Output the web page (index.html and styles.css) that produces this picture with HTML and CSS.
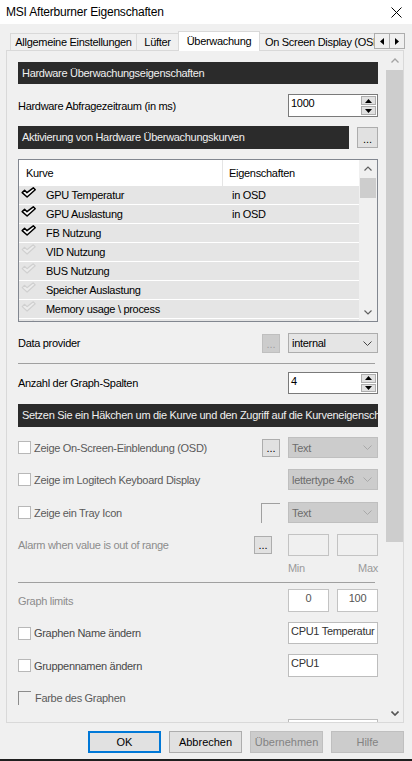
FILE: index.html
```html
<!DOCTYPE html>
<html lang="de">
<head>
<meta charset="UTF-8" />
<meta name="viewport" content="width=device-width, initial-scale=1.0"/>
<title>MSI Afterburner Eigenschaften</title>
<link rel="stylesheet" href="styles.css">
</head>
<body>
    <!-- shared tick shape for the curve list -->
    <svg class="svg-defs" aria-hidden="true">
        <defs>
            <symbol id="tick" viewBox="0 0 15 11">
                <path d="M1.2 5.6 L3.6 3.3 L6 5.7 L12.3 0.8 L14.2 2.8 L6.1 10 Z"/>
            </symbol>
        </defs>
    </svg>

    <!-- Title bar -->
    <div class="titlebar">
        <span class="title">MSI Afterburner Eigenschaften</span>
        <svg class="close" width="11" height="11" viewBox="0 0 11 11">
            <path d="M0.5 0.5 L10.5 10.5 M10.5 0.5 L0.5 10.5" stroke="#000" stroke-width="1"/>
        </svg>
    </div>

    <!-- Tabs -->
    <div class="tabstrip">
        <div class="tabs">
            <div class="tab tab-general">Allgemeine Einstellungen</div>
            <div class="tab tab-fan">Lüfter</div>
            <div class="tab tab-active">Überwachung</div>
            <div class="tab tab-osd">On Screen Display (OSD)</div>
        </div>
        <div class="tab-arrows">
            <div class="tab-arrow">
                <svg width="4" height="7" viewBox="0 0 4 7"><path d="M4 0 L0 3.5 L4 7 Z"/></svg>
            </div>
            <div class="tab-arrow">
                <svg width="4" height="7" viewBox="0 0 4 7"><path d="M0 0 L4 3.5 L0 7 Z"/></svg>
            </div>
        </div>
    </div>

    <div class="page">
        <div class="content">
            <div class="section-head">Hardware Überwachungseigenschaften</div>

            <div class="row row-poll">
                <span class="label">Hardware Abfragezeitraum (in ms)</span>
                <div class="textbox spinbox">
                    <span class="value">1000</span>
                    <div class="spin">
                        <span class="spin-btn"><svg width="7" height="4" viewBox="0 0 7 4"><path d="M0 4 L3.5 0 L7 4 Z"/></svg></span>
                        <span class="spin-btn"><svg width="7" height="4" viewBox="0 0 7 4"><path d="M0 0 L7 0 L3.5 4 Z"/></svg></span>
                    </div>
                </div>
            </div>

            <div class="row row-curves">
                <div class="section-head head-curves">Aktivierung von Hardware Überwachungskurven</div>
                <button class="dots dots-head">...</button>
            </div>

            <div class="curve-list">
                <div class="list-main">
                    <div class="list-header">
                        <span class="hdr-name">Kurve</span>
                        <span class="hdr-props">Eigenschaften</span>
                    </div>
                    <div class="list-row">
                        <svg class="tick on"><use href="#tick"/></svg>
                        <span class="item-name">GPU Temperatur</span>
                        <span class="item-props">in OSD</span>
                    </div>
                    <div class="list-row">
                        <svg class="tick on"><use href="#tick"/></svg>
                        <span class="item-name">GPU Auslastung</span>
                        <span class="item-props">in OSD</span>
                    </div>
                    <div class="list-row">
                        <svg class="tick on"><use href="#tick"/></svg>
                        <span class="item-name">FB Nutzung</span>
                    </div>
                    <div class="list-row">
                        <svg class="tick"><use href="#tick"/></svg>
                        <span class="item-name">VID Nutzung</span>
                    </div>
                    <div class="list-row">
                        <svg class="tick"><use href="#tick"/></svg>
                        <span class="item-name">BUS Nutzung</span>
                    </div>
                    <div class="list-row">
                        <svg class="tick"><use href="#tick"/></svg>
                        <span class="item-name">Speicher Auslastung</span>
                    </div>
                    <div class="list-row">
                        <svg class="tick"><use href="#tick"/></svg>
                        <span class="item-name">Memory usage \ process</span>
                    </div>
                    <div class="list-row">
                        <svg class="tick"><use href="#tick"/></svg>
                    </div>
                </div>
                <div class="list-scroll">
                    <span class="sb-btn"><svg width="8" height="5" viewBox="0 0 8 5"><path d="M0.5 4.5 L4 1 L7.5 4.5" fill="none" stroke="#606060" stroke-width="1.2"/></svg></span>
                    <span class="sb-thumb list-thumb"></span>
                    <span class="sb-fill"></span>
                    <span class="sb-btn"><svg width="8" height="5" viewBox="0 0 8 5"><path d="M0.5 0.5 L4 4 L7.5 0.5" fill="none" stroke="#606060" stroke-width="1.2"/></svg></span>
                </div>
            </div>

            <div class="row row-provider">
                <span class="label">Data provider</span>
                <button class="dots" disabled>...</button>
                <div class="combo combo-on">
                    <span>internal</span>
                    <svg width="9" height="5" viewBox="0 0 9 5"><path d="M0.5 0.5 L4.5 4.5 L8.5 0.5" fill="none" stroke="#444" stroke-width="1"/></svg>
                </div>
            </div>

            <div class="separator sep-top"></div>

            <div class="row row-columns">
                <span class="label">Anzahl der Graph-Spalten</span>
                <div class="textbox spinbox">
                    <span class="value">4</span>
                    <div class="spin">
                        <span class="spin-btn"><svg width="7" height="4" viewBox="0 0 7 4"><path d="M0 4 L3.5 0 L7 4 Z"/></svg></span>
                        <span class="spin-btn"><svg width="7" height="4" viewBox="0 0 7 4"><path d="M0 0 L7 0 L3.5 4 Z"/></svg></span>
                    </div>
                </div>
            </div>

            <div class="section-head head-hint">Setzen Sie ein Häkchen um die Kurve und den Zugriff auf die Kurveneigenschaften zu aktivieren</div>

            <div class="row row-osd">
                <span class="checkbox"></span>
                <span class="label muted">Zeige On-Screen-Einblendung (OSD)</span>
                <button class="dots">...</button>
                <div class="combo">
                    <span>Text</span>
                    <svg width="9" height="5" viewBox="0 0 9 5"><path d="M0.5 0.5 L4.5 4.5 L8.5 0.5" fill="none" stroke="#a8a8a8" stroke-width="1"/></svg>
                </div>
            </div>

            <div class="row row-lcd">
                <span class="checkbox"></span>
                <span class="label muted">Zeige im Logitech Keyboard Display</span>
                <div class="combo">
                    <span>lettertype 4x6</span>
                    <svg width="9" height="5" viewBox="0 0 9 5"><path d="M0.5 0.5 L4.5 4.5 L8.5 0.5" fill="none" stroke="#a8a8a8" stroke-width="1"/></svg>
                </div>
            </div>

            <div class="row row-tray">
                <span class="checkbox"></span>
                <span class="label muted">Zeige ein Tray Icon</span>
                <span class="color-well"></span>
                <div class="combo">
                    <span>Text</span>
                    <svg width="9" height="5" viewBox="0 0 9 5"><path d="M0.5 0.5 L4.5 4.5 L8.5 0.5" fill="none" stroke="#a8a8a8" stroke-width="1"/></svg>
                </div>
            </div>

            <div class="row row-alarm">
                <span class="label faint">Alarm when value is out of range</span>
                <button class="dots">...</button>
                <span class="smallbox"></span>
                <span class="smallbox"></span>
            </div>

            <div class="row row-minmax">
                <span class="label"></span>
                <span class="range-cap">Min</span>
                <span class="range-cap cap-right">Max</span>
            </div>

            <div class="separator sep-limits"></div>

            <div class="row row-limits">
                <span class="label faint">Graph limits</span>
                <span class="smallbox filled">0</span>
                <span class="smallbox filled">100</span>
            </div>

            <div class="row row-name">
                <span class="checkbox"></span>
                <span class="label dim">Graphen Name ändern</span>
                <span class="textbox namebox">CPU1 Temperatur</span>
            </div>

            <div class="row row-group">
                <span class="checkbox"></span>
                <span class="label dim">Gruppennamen ändern</span>
                <span class="textbox namebox">CPU1</span>
            </div>

            <div class="row row-color">
                <span class="checkbox sunken"></span>
                <span class="label muted">Farbe des Graphen</span>
            </div>

            <div class="row row-cut">
                <span class="label"></span>
                <span class="textbox namebox"></span>
            </div>
        </div>

        <div class="vscroll">
            <span class="sb-btn main-up"><svg width="8" height="5" viewBox="0 0 8 5"><path d="M0.5 4.5 L4 1 L7.5 4.5" fill="none" stroke="#a3a3a3" stroke-width="1.3"/></svg></span>
            <span class="sb-thumb main-thumb"></span>
            <span class="sb-fill"></span>
            <span class="sb-btn main-down"><svg width="8" height="5" viewBox="0 0 8 5"><path d="M0.5 0.5 L4 4 L7.5 0.5" fill="none" stroke="#555" stroke-width="1.6"/></svg></span>
        </div>
    </div>

    <div class="buttons">
        <button class="btn btn-default">OK</button>
        <button class="btn">Abbrechen</button>
        <button class="btn" disabled>Übernehmen</button>
        <button class="btn" disabled>Hilfe</button>
    </div>
    <div class="edge"></div>
</body>
</html>
```

FILE: styles.css
```css
html, body {
    margin: 0;
    padding: 0;
    height: 100%;
    overflow: hidden;
}

body {
    font-family: "Liberation Sans", Arial, sans-serif;
    font-size: 11px;
    letter-spacing: -0.3px;
    color: #000;
    background: #f0f0f0;
}

.svg-defs {
    position: absolute;
    width: 0;
    height: 0;
}

/* ---- title bar ---- */
.titlebar {
    height: 24px;
    background: #fff;
    display: flex;
    align-items: center;
    justify-content: space-between;
    padding: 0 10px 0 6px;
}

.title {
    font-size: 12px;
    letter-spacing: -0.2px;
}

/* ---- tab strip ---- */
.tabstrip {
    margin-top: 7px;
    height: 20px;
    padding: 0 7px 0 10px;
    display: flex;
    position: relative;
    z-index: 1;
}

.tabs {
    flex: 1;
    min-width: 0;
    display: flex;
    align-items: flex-start;
    overflow: hidden;
}

.tab {
    flex: none;
    box-sizing: border-box;
    height: 17px;
    margin-top: 2px;
    margin-left: -1px;
    border: 1px solid #d9d9d9;
    border-bottom: none;
    text-align: center;
    line-height: 16px;
    white-space: nowrap;
}
.tab:first-child { margin-left: 0; }

.tab-general { width: 127px; }
.tab-fan { width: 43px; }

.tab-active {
    width: 82px;
    height: 20px;
    margin-top: 0;
    background: #fff;
    line-height: 18px;
}

.tab-osd {
    padding-left: 5px;
    text-align: left;
}

.tab-arrows {
    display: flex;
    margin-top: 2px;
}

.tab-arrow {
    box-sizing: border-box;
    width: 16px;
    height: 16px;
    border: 1px solid #adadad;
    background: #f0f0f0;
    display: flex;
    align-items: center;
    justify-content: center;
}
.tab-arrow + .tab-arrow { margin-left: -1px; }

/* ---- tab page ---- */
.page {
    box-sizing: border-box;
    width: 398px;
    height: 673px;
    margin: -1px 0 0 6px;
    border: 1px solid #d9d9d9;
    background: #fff;
    display: flex;
}

.content {
    flex: 1;
    min-width: 0;
    overflow: hidden;
    padding: 11px 8px 0 11px;
    background: #f0f0f0;
}

.section-head {
    height: 22px;
    line-height: 22px;
    padding-left: 4px;
    background: #2b2b2b;
    color: #f0f0f0;
    white-space: nowrap;
    overflow: hidden;
}

.row {
    display: flex;
    align-items: center;
}

.label {
    flex: 1;
    min-width: 0;
    white-space: nowrap;
}

.muted { color: #5a5a5a; }
.dim { color: #484848; }
.faint { color: #8c8c8c; }

/* vertical rhythm of the form */
.row-poll { margin-top: 10px; height: 23px; }
.row-curves { margin-top: 9px; height: 23px; }
.row-provider { margin-top: 11px; height: 20px; }
.row-columns { margin-top: 8px; height: 22px; }
.head-hint { margin-top: 10px; height: 23px; line-height: 23px; }
.row-osd { margin-top: 10px; height: 21px; }
.row-lcd { margin-top: 11px; height: 21px; }
.row-tray { margin-top: 12px; height: 21px; }
.row-alarm { margin-top: 11px; height: 22px; }
.row-minmax { margin-top: 6px; height: 12px; }
.row-limits { margin-top: 6px; height: 23px; }
.row-name { margin-top: 10px; height: 22px; }
.row-group { margin-top: 10px; height: 23px; }
.row-color { margin-top: 13px; height: 15px; }
.row-cut { margin-top: 14px; height: 22px; }

.head-curves {
    flex: 1;
    height: 23px;
    line-height: 23px;
}

.separator {
    width: 357px;
    border-top: 1px solid #a0a0a0;
}
.sep-top { margin-top: 10px; }
.sep-limits { margin-top: 8px; }

/* ---- inputs ---- */
.textbox {
    box-sizing: border-box;
    width: 90px;
    height: 100%;
    border: 1px solid #7a7a7a;
    background: #fff;
    display: flex;
    padding: 1px 1px 1px 2px;
    white-space: nowrap;
    overflow: hidden;
}

.value {
    flex: 1;
    padding-top: 1px;
}

.spin {
    width: 15px;
    display: flex;
    flex-direction: column;
    gap: 1px;
}

.spin-btn {
    flex: 1;
    box-sizing: border-box;
    border: 1px solid #adadad;
    background: #e1e1e1;
    display: flex;
    align-items: center;
    justify-content: center;
}

.namebox {
    border-color: #bdbdbd;
    color: #333;
    padding: 2px 2px 0 2px;
}

.smallbox {
    box-sizing: border-box;
    width: 41px;
    height: 100%;
    border: 1px solid #c3c3c3;
    margin-left: 8px;
    color: #555;
    text-align: center;
    padding-top: 2px;
}
.row-alarm .smallbox:first-of-type,
.row-limits .smallbox:first-of-type { margin-left: 0; }

.filled { background: #fff; }

.range-cap {
    width: 41px;
    color: #9a9a9a;
}
.cap-right {
    margin-left: 8px;
    text-align: right;
}

.combo {
    box-sizing: border-box;
    width: 90px;
    height: 100%;
    border: 1px solid #bfbfbf;
    background: #ccc;
    color: #6d6d6d;
    display: flex;
    align-items: center;
    justify-content: space-between;
    padding: 0 5px 0 3px;
    white-space: nowrap;
}

.combo-on {
    background: #e5e5e5;
    border-color: #adadad;
    color: #000;
}

.dots {
    box-sizing: border-box;
    width: 18px;
    height: 18px;
    margin: 0 8px 0 0;
    padding: 0 0 2px 0;
    border: 1px solid #adadad;
    background: #e1e1e1;
    font: inherit;
    color: #000;
    line-height: 1;
    display: flex;
    align-items: flex-end;
    justify-content: center;
}

.dots:disabled {
    height: 19px;
    background: #ccc;
    border-color: #bfbfbf;
    color: #a0a0a0;
}

.dots-head {
    width: 21px;
    height: 21px;
    margin: 0 0 0 8px;
}

.checkbox {
    box-sizing: border-box;
    width: 13px;
    height: 13px;
    margin-right: 3px;
    border: 1px solid #b8b8b8;
    background: #fff;
}

.checkbox.sunken {
    height: 14px;
    margin-right: 4px;
    border: none;
    border-top: 1px solid #8c8c8c;
    border-left: 1px solid #8c8c8c;
    background: transparent;
}

.color-well {
    box-sizing: border-box;
    width: 19px;
    height: 20px;
    margin-right: 8px;
    border-top: 1px solid #a0a0a0;
    border-left: 1px solid #a0a0a0;
}

/* ---- curve list ---- */
.curve-list {
    box-sizing: border-box;
    margin-top: 10px;
    width: 360px;
    height: 163px;
    border: 1px solid #828790;
    display: flex;
    overflow: hidden;
}

.list-main {
    flex: 1;
    min-width: 0;
    overflow: hidden;
}

.list-header {
    height: 26px;
    background: #fff;
    display: flex;
    align-items: center;
}

.hdr-name {
    box-sizing: border-box;
    width: 204px;
    height: 100%;
    padding-left: 7px;
    border-right: 1px solid #e5e5e5;
    display: flex;
    align-items: center;
}

.hdr-props { padding-left: 6px; }

.list-row {
    height: 18px;
    border-bottom: 1px solid #fff;
    background: #e5e5e5;
    display: flex;
    align-items: center;
    white-space: nowrap;
}

.tick {
    flex: none;
    width: 15px;
    height: 11px;
    margin-left: 2px;
    align-self: flex-start;
    margin-top: 1px;
    fill: #ececec;
    stroke: #d0d0d0;
    stroke-width: 1.2;
    stroke-linejoin: round;
}

.tick.on {
    fill: #fff;
    stroke: #000;
    stroke-width: 1.5;
}

.item-name {
    width: 177px;
    margin-left: 10px;
}

.item-props { padding-left: 9px; }

/* ---- scroll bars ---- */
.list-scroll,
.vscroll {
    flex: none;
    width: 17px;
    background: #f0f0f0;
    display: flex;
    flex-direction: column;
}

.list-scroll { width: 18px; }

.sb-btn {
    height: 17px;
    display: flex;
    align-items: center;
    justify-content: center;
}

.sb-thumb {
    background: #cdcdcd;
    margin: 0 1px;
}

.list-thumb {
    margin-top: 1px;
    height: 20px;
}

.sb-fill { flex: 1; }

.main-up { height: 18px; }

.main-thumb {
    margin: 1px 0 0 0;
    height: 472px;
}

/* ---- dialog buttons ---- */
.buttons {
    height: 22px;
    margin-top: 8px;
    padding-right: 8px;
    display: flex;
    justify-content: flex-end;
    gap: 8px;
}

.btn {
    box-sizing: border-box;
    width: 73px;
    height: 22px;
    padding: 0;
    border: 1px solid #adadad;
    background: #e1e1e1;
    font: inherit;
    color: #000;
}

.btn-default {
    border: 2px solid #0078d7;
}

.btn:disabled {
    background: #ccc;
    border-color: #bfbfbf;
    color: #838383;
}

.edge {
    height: 2px;
    margin-top: 6px;
    background: #1f1f1f;
}
```
